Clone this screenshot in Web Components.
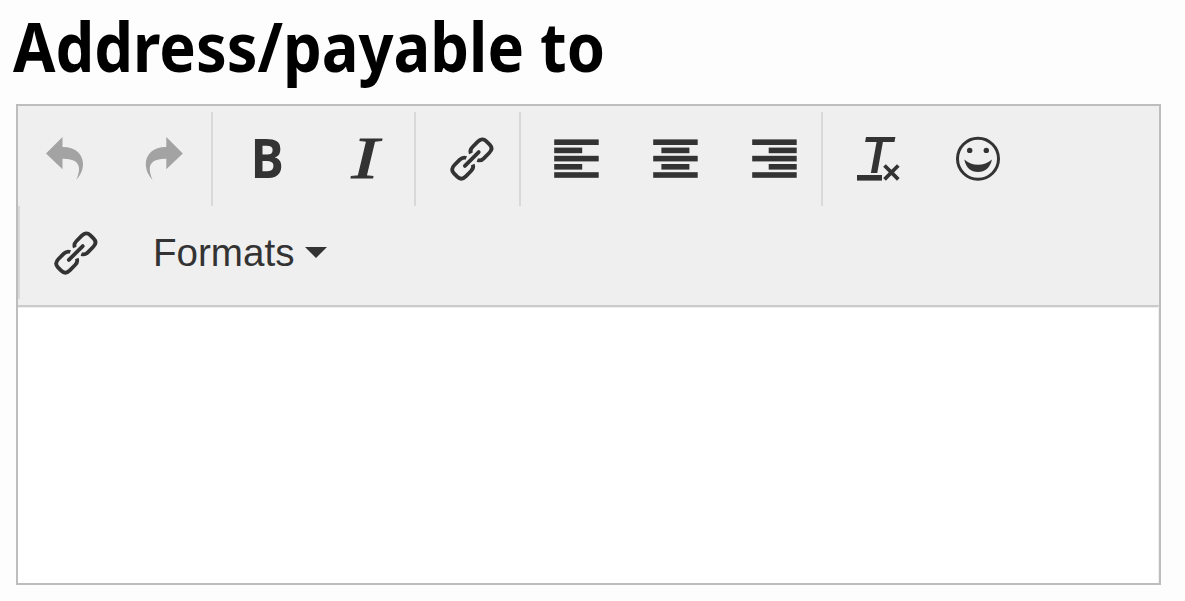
<!DOCTYPE html>
<html lang="en">
<head>
<meta charset="utf-8">
<title>Address/payable to</title>
<style>
body{margin:0;background:#fdfdfd;font-family:"Liberation Sans",Arial,sans-serif;color:#333}
</style>
</head>
<body>
<editor-field label="Address/payable to"></editor-field>
<script>
const shadow = (el, html) => { el.attachShadow({mode:"open"}).innerHTML = html; };

const chain = `<g transform="translate(24.8 24) rotate(-45)" fill="none" stroke="#333" stroke-width="3.8">
  <path d="M-9.8 0H9.8" stroke-linecap="round"/>
  <path d="M3.2 -4.6Q4.6 -8 9 -8H16.5Q22.8 -8 22.8 -2.5V2.5Q22.8 8 16.5 8H9Q4.6 8 3.2 4.6"/>
  <path d="M-3.2 -4.6Q-4.6 -8 -9 -8H-16.5Q-22.8 -8 -22.8 -2.5V2.5Q-22.8 8 -16.5 8H-9Q-4.6 8 -3.2 4.6"/></g>`;
const arrow = "M5 18.5L21.5 2V12C34 11.8 42 19 42 29C42 35 39.5 40 35.3 45C37.3 40 38 37 38 34C38 27 32 23.5 21.5 23.8V34.3Z";
const bars = x => [0,1,2,3,4].map(i => `<rect x="${i%2?x:2.2}" y="${4.4+i*8.2}" width="${i%2?28:44.5}" height="5.6"/>`).join("");
const ICONS = {
  undo:`<path fill="#a3a3a3" d="${arrow}"/>`,
  redo:`<path fill="#a3a3a3" transform="matrix(-1 0 0 1 47.8 0)" d="${arrow}"/>`,
  bold:`<text transform="translate(6.6 43) scale(.92 1)" font-family="Open Sans" font-weight="700" font-size="54">B</text>`,
  italic:`<text transform="translate(8.6 43) scale(1.38 1)" font-family="Liberation Serif" font-style="italic" font-size="59" stroke="#333" stroke-width="1">I</text>`,
  link:chain,
  left:bars(2.2), center:bars(10.4), right:bars(18.7),
  clear:`<text transform="translate(7 37.7) scale(1.06 1)" font-family="Roboto" font-style="italic" font-weight="500" font-size="50.5">T</text>
    <rect x="3" y="40" width="25" height="5.6"/><path d="M30.5 30.5L44.3 44.3M44.3 30.5L30.5 44.3" stroke="#333" stroke-width="3.8"/>`,
  smile:`<circle cx="25" cy="23.8" r="20.5" fill="none" stroke="#333" stroke-width="3"/>
    <circle cx="16.7" cy="15.4" r="2.7"/><circle cx="33.3" cy="15.4" r="2.7"/>
    <path d="M11.3 24.5C19 31.6 31 31.6 39 24.5C37 33 32 37 25 37S13 33 11.3 24.5Z"/>`
};

customElements.define("tool-button", class extends HTMLElement {
  connectedCallback(){
    shadow(this, `<style>
      :host{display:block;flex:none;width:99px;box-sizing:border-box;padding:23px 25px 0}
      svg{display:block;overflow:visible;fill:#333}
    </style><svg width="49" height="49" viewBox="0 0 49 49">${ICONS[this.getAttribute("icon")]}</svg>`);
  }
});

customElements.define("tool-group", class extends HTMLElement {
  connectedCallback(){
    shadow(this, `<style>
      :host{display:flex;flex:none;box-sizing:border-box;height:94px;border-left:2px solid #d9d9d9;padding-left:6px}
      :host([first]){border:0;padding:0}
      :host([first]) slot{display:flex;margin-left:-2px}
    </style><slot></slot>`);
    this.style.width = this.getAttribute("width") + "px";
  }
});

customElements.define("format-menu", class extends HTMLElement {
  connectedCallback(){
    shadow(this, `<style>
      :host{display:flex;align-items:center;height:93px;padding-left:28px;font-size:38.6px;line-height:44px;white-space:nowrap}
      svg{margin:0 0 0 11px}
    </style><slot></slot><svg width="22" height="11" viewBox="0 0 22 11"><path fill="#333" d="M0 0H22L11 11Z"/></svg>`);
  }
});

customElements.define("tool-bar", class extends HTMLElement {
  connectedCallback(){
    shadow(this, `<style>
      :host{display:block;flex:none;height:199px;box-sizing:border-box;padding-top:6px;background:#efefef}
      .row{display:flex;height:94px}
      .second{height:93px}
      .second tool-group{height:93px}
    </style>
    <div class="row">
      <tool-group first width="193"><tool-button icon="undo"></tool-button><tool-button icon="redo"></tool-button></tool-group>
      <tool-group width="203"><tool-button icon="bold"></tool-button><tool-button icon="italic"></tool-button></tool-group>
      <tool-group width="105"><tool-button icon="link"></tool-button></tool-group>
      <tool-group width="302"><tool-button icon="left"></tool-button><tool-button icon="center"></tool-button><tool-button icon="right"></tool-button></tool-group>
      <tool-group width="206"><tool-button icon="clear"></tool-button><tool-button icon="smile"></tool-button></tool-group>
    </div>
    <div class="row second">
      <tool-group width="320"><tool-button icon="link"></tool-button><format-menu>Formats</format-menu></tool-group>
    </div>`);
  }
});

customElements.define("editor-field", class extends HTMLElement {
  connectedCallback(){
    shadow(this, `<style>
      :host{display:flex;flex-direction:column;box-sizing:border-box;height:601px;padding:0 24px 16px 16px}
      h1{margin:0 0 0 -16px;height:104px;flex:none}
      h1 svg{display:block;overflow:visible}
      .frame{flex:1;box-sizing:border-box;border:2px solid #bdbdbd;background:#fff;display:flex;flex-direction:column}
      .area{flex:1;border-top:2px solid #cbcbcb;border-right:1px solid #f0f0f0;box-shadow:inset 0 1px #eee}
    </style>
    <h1><svg width="700" height="104"><text x="13" y="72" fill="#000" font-family="Noto Sans" font-weight="700" font-size="69" textLength="592" lengthAdjust="spacingAndGlyphs">${this.getAttribute("label")}</text></svg></h1>
    <div class="frame"><tool-bar></tool-bar><div class="area"></div></div>`);
  }
});
</script>
</body>
</html>
